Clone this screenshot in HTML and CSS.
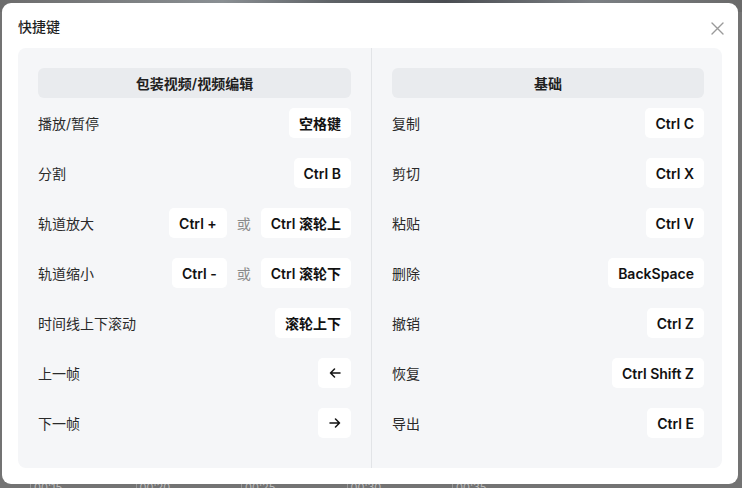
FILE: index.html
```html
<!DOCTYPE html>
<html lang="zh">
<head>
<meta charset="utf-8">
<link rel="stylesheet" href="styles.css">
</head>
<body>
<div class="backdrop-top"></div>
<div class="timeline">
  <span class="tick">00:15</span><span class="tick">00:20</span><span class="tick">00:25</span><span class="tick">00:30</span><span class="tick">00:35</span>
</div>
<div class="modal">
  <div class="modal-head">
    <span class="modal-title">快捷键</span>
    <svg class="close" width="13" height="13" viewBox="0 0 13 13"><path d="M1 1L12 12M12 1L1 12" stroke="#9a9a9a" stroke-width="1.4" stroke-linecap="round" fill="none"/></svg>
  </div>
  <div class="panel">
    <div class="col">
      <div class="col-title">包装视频/视频编辑</div>
      <div class="row"><span class="label">播放/暂停</span><div class="keys"><span class="key">空格键</span></div></div>
      <div class="row"><span class="label">分割</span><div class="keys"><span class="key">Ctrl B</span></div></div>
      <div class="row"><span class="label">轨道放大</span><div class="keys"><span class="key">Ctrl +</span><span class="or">或</span><span class="key">Ctrl 滚轮上</span></div></div>
      <div class="row"><span class="label">轨道缩小</span><div class="keys"><span class="key">Ctrl -</span><span class="or">或</span><span class="key">Ctrl 滚轮下</span></div></div>
      <div class="row"><span class="label">时间线上下滚动</span><div class="keys"><span class="key">滚轮上下</span></div></div>
      <div class="row"><span class="label">上一帧</span><div class="keys"><span class="key arrow"><svg width="12" height="10" viewBox="0 0 12 10"><path d="M11 5H1.5M5.5 1L1.5 5L5.5 9" stroke="#111" stroke-width="1.5" fill="none" stroke-linecap="round" stroke-linejoin="round"/></svg></span></div></div>
      <div class="row"><span class="label">下一帧</span><div class="keys"><span class="key arrow"><svg width="12" height="10" viewBox="0 0 12 10"><path d="M1 5H10.5M6.5 1L10.5 5L6.5 9" stroke="#111" stroke-width="1.5" fill="none" stroke-linecap="round" stroke-linejoin="round"/></svg></span></div></div>
    </div>
    <div class="col col-right">
      <div class="col-title">基础</div>
      <div class="row"><span class="label">复制</span><div class="keys"><span class="key">Ctrl C</span></div></div>
      <div class="row"><span class="label">剪切</span><div class="keys"><span class="key">Ctrl X</span></div></div>
      <div class="row"><span class="label">粘贴</span><div class="keys"><span class="key">Ctrl V</span></div></div>
      <div class="row"><span class="label">删除</span><div class="keys"><span class="key">BackSpace</span></div></div>
      <div class="row"><span class="label">撤销</span><div class="keys"><span class="key">Ctrl Z</span></div></div>
      <div class="row"><span class="label">恢复</span><div class="keys"><span class="key">Ctrl Shift Z</span></div></div>
      <div class="row"><span class="label">导出</span><div class="keys"><span class="key">Ctrl E</span></div></div>
    </div>
  </div>
</div>
</body>
</html>
```

FILE: styles.css
```css
html, body {
  margin: 0;
  padding: 0;
}
body {
  width: 742px;
  height: 488px;
  overflow: hidden;
  position: relative;
  background: #737373;
  font-family: Inter, "Noto Sans CJK SC", sans-serif;
  color: #1f1f1f;
}
.backdrop-top {
  position: absolute;
  left: 0;
  top: 0;
  width: 742px;
  height: 12px;
  background: linear-gradient(90deg, #6c6c6c 0%, #8a8f93 30%, #5e6266 45%, #4a4d52 60%, #7b7f83 80%, #6a6a6a 100%);
}
.timeline {
  position: absolute;
  left: 30px;
  bottom: -6px;
  display: flex;
  font-size: 11px;
  line-height: 14px;
  color: #bdbdbd;
}
.tick {
  width: 105.5px;
  border-left: 1px solid #9a9a9a;
  padding-left: 3px;
  box-sizing: border-box;
  height: 14px;
}
.modal {
  position: relative;
  margin: 3px 0 0 2px;
  width: 736px;
  height: 481px;
  box-sizing: border-box;
  background: #ffffff;
  border-radius: 9px;
  padding: 0 16px 16px;
  display: flex;
  flex-direction: column;
}
.modal-head {
  height: 45px;
  display: flex;
  align-items: center;
  justify-content: space-between;
}
.modal-title {
  font-size: 14px;
  font-weight: 500;
  color: #1f1f1f;
  margin-top: 1px;
}
.close {
  margin-right: -2px;
  margin-top: 5px;
}
.panel {
  flex: 1;
  background: #f5f6f8;
  border-radius: 8px;
  display: grid;
  grid-template-columns: 353px 1fr;
}
.col {
  padding: 20px;
  display: flex;
  flex-direction: column;
}
.col-right {
  border-left: 1px solid #e2e4e7;
  padding-right: 18px;
}
.col-title {
  height: 30px;
  background: #e9ebee;
  border-radius: 6px;
  display: flex;
  align-items: center;
  justify-content: center;
  font-size: 14px;
  font-weight: 600;
  color: #1f1f1f;
}
.row {
  height: 50px;
  display: flex;
  align-items: center;
  justify-content: space-between;
}
.label {
  font-size: 14px;
  color: #2a2a2a;
}
.keys {
  display: flex;
  align-items: center;
  gap: 10px;
}
.key {
  height: 30px;
  padding: 0 10px;
  background: #ffffff;
  border-radius: 5px;
  display: flex;
  align-items: center;
  font-size: 14px;
  font-weight: 600;
  color: #111;
}
.key.arrow {
  width: 33px;
  padding: 0;
  justify-content: center;
  box-sizing: border-box;
}
.or {
  font-size: 14px;
  color: #8a8a8a;
  width: 14px;
}
```
